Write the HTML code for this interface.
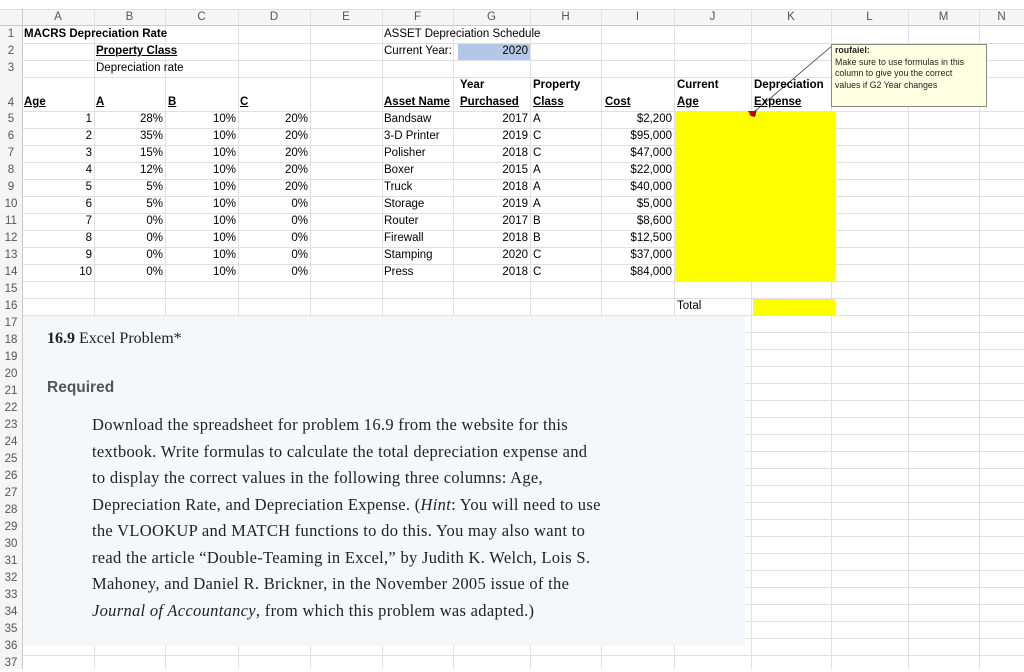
<!DOCTYPE html>
<html><head><meta charset="utf-8">
<style>
*{margin:0;padding:0;box-sizing:border-box}
body{width:1024px;height:669px;overflow:hidden;background:#fff;position:relative;font-family:"Liberation Sans",sans-serif;font-size:11.5px;color:#000}
.t{position:absolute;height:17px;line-height:17px;white-space:nowrap}
.r{text-align:right}
.b{font-weight:bold}
.u{text-decoration:underline}
.h{position:absolute;color:#555;font-size:11.5px;text-align:center;height:17px;line-height:17px}
.sr{font-family:"Liberation Serif",serif;color:#222}
</style></head><body>
<svg width="1024" height="669" style="position:absolute;left:0;top:0">
<rect x="0" y="0" width="1024" height="9" fill="#fff"/>
<rect x="0" y="9" width="1024" height="17" fill="#f5f5f5"/>
<rect x="0" y="9" width="22" height="660" fill="#f5f5f5"/>
<g stroke="#e0e0e0" stroke-width="1">
<line x1="0" y1="25.5" x2="1024" y2="25.5" stroke="#c8c8c8"/>
<line x1="0" y1="9.5" x2="1024" y2="9.5"/>
<line x1="22" y1="43.5" x2="1024" y2="43.5"/><line x1="22" y1="60.5" x2="1024" y2="60.5"/><line x1="22" y1="77.5" x2="1024" y2="77.5"/>
<line x1="22" y1="111.5" x2="1024" y2="111.5"/><line x1="22" y1="128.5" x2="1024" y2="128.5"/><line x1="22" y1="145.5" x2="1024" y2="145.5"/><line x1="22" y1="162.5" x2="1024" y2="162.5"/><line x1="22" y1="179.5" x2="1024" y2="179.5"/><line x1="22" y1="196.5" x2="1024" y2="196.5"/><line x1="22" y1="213.5" x2="1024" y2="213.5"/><line x1="22" y1="230.5" x2="1024" y2="230.5"/><line x1="22" y1="247.5" x2="1024" y2="247.5"/><line x1="22" y1="264.5" x2="1024" y2="264.5"/><line x1="22" y1="281.5" x2="1024" y2="281.5"/><line x1="22" y1="298.5" x2="1024" y2="298.5"/><line x1="22" y1="315.5" x2="1024" y2="315.5"/><line x1="22" y1="332.5" x2="1024" y2="332.5"/><line x1="22" y1="349.5" x2="1024" y2="349.5"/><line x1="22" y1="366.5" x2="1024" y2="366.5"/><line x1="22" y1="383.5" x2="1024" y2="383.5"/><line x1="22" y1="400.5" x2="1024" y2="400.5"/><line x1="22" y1="417.5" x2="1024" y2="417.5"/><line x1="22" y1="434.5" x2="1024" y2="434.5"/><line x1="22" y1="451.5" x2="1024" y2="451.5"/><line x1="22" y1="468.5" x2="1024" y2="468.5"/><line x1="22" y1="485.5" x2="1024" y2="485.5"/><line x1="22" y1="502.5" x2="1024" y2="502.5"/><line x1="22" y1="519.5" x2="1024" y2="519.5"/><line x1="22" y1="536.5" x2="1024" y2="536.5"/><line x1="22" y1="553.5" x2="1024" y2="553.5"/><line x1="22" y1="570.5" x2="1024" y2="570.5"/><line x1="22" y1="587.5" x2="1024" y2="587.5"/><line x1="22" y1="604.5" x2="1024" y2="604.5"/><line x1="22" y1="621.5" x2="1024" y2="621.5"/><line x1="22" y1="638.5" x2="1024" y2="638.5"/><line x1="22" y1="655.5" x2="1024" y2="655.5"/>
<line x1="22.5" y1="9" x2="22.5" y2="669" stroke="#c8c8c8"/>
<line x1="94.5" y1="9" x2="94.5" y2="669"/><line x1="165.5" y1="9" x2="165.5" y2="669"/><line x1="238.5" y1="9" x2="238.5" y2="669"/><line x1="310.5" y1="9" x2="310.5" y2="669"/><line x1="382.5" y1="9" x2="382.5" y2="669"/><line x1="453.5" y1="9" x2="453.5" y2="669"/><line x1="530.5" y1="9" x2="530.5" y2="669"/><line x1="601.5" y1="9" x2="601.5" y2="669"/><line x1="674.5" y1="9" x2="674.5" y2="669"/><line x1="751.5" y1="9" x2="751.5" y2="669"/><line x1="831.5" y1="9" x2="831.5" y2="669"/><line x1="908.5" y1="9" x2="908.5" y2="669"/><line x1="979.5" y1="9" x2="979.5" y2="669"/>
</g>
<rect x="458" y="44" width="72" height="16" fill="#b4c7e7"/>
<rect x="675" y="112" width="160" height="169" fill="#ffff00"/>
<rect x="753" y="299" width="82" height="16" fill="#ffff00"/>
<rect x="23" y="316" width="722" height="330" fill="#f6f7fa"/>
<line x1="833" y1="45" x2="754" y2="112" stroke="#333" stroke-width="0.8"/>
<polygon points="749,115 757,109 755,117" fill="#333"/>
<polygon points="748,111 756,111 752,117" fill="#c00"/>
<rect x="831.5" y="44.5" width="155" height="62" fill="#ffffe1" stroke="#888"/>
</svg>

<div class="h" style="left:22px;top:9px;width:72px">A</div><div class="h" style="left:94px;top:9px;width:71px">B</div><div class="h" style="left:165px;top:9px;width:73px">C</div><div class="h" style="left:238px;top:9px;width:72px">D</div><div class="h" style="left:310px;top:9px;width:72px">E</div><div class="h" style="left:382px;top:9px;width:71px">F</div><div class="h" style="left:453px;top:9px;width:77px">G</div><div class="h" style="left:530px;top:9px;width:71px">H</div><div class="h" style="left:601px;top:9px;width:73px">I</div><div class="h" style="left:674px;top:9px;width:77px">J</div><div class="h" style="left:751px;top:9px;width:80px">K</div><div class="h" style="left:831px;top:9px;width:77px">L</div><div class="h" style="left:908px;top:9px;width:71px">M</div><div class="h" style="left:979px;top:9px;width:45px">N</div>

<div class="h" style="left:0;width:22px;top:26px">1</div><div class="h" style="left:0;width:22px;top:43px">2</div><div class="h" style="left:0;width:22px;top:60px">3</div><div class="h" style="left:0;width:22px;top:95px">4</div>
<div class="h" style="left:0;width:22px;top:111px">5</div><div class="h" style="left:0;width:22px;top:128px">6</div><div class="h" style="left:0;width:22px;top:145px">7</div><div class="h" style="left:0;width:22px;top:162px">8</div><div class="h" style="left:0;width:22px;top:179px">9</div><div class="h" style="left:0;width:22px;top:196px">10</div><div class="h" style="left:0;width:22px;top:213px">11</div><div class="h" style="left:0;width:22px;top:230px">12</div><div class="h" style="left:0;width:22px;top:247px">13</div><div class="h" style="left:0;width:22px;top:264px">14</div><div class="h" style="left:0;width:22px;top:281px">15</div><div class="h" style="left:0;width:22px;top:298px">16</div><div class="h" style="left:0;width:22px;top:315px">17</div><div class="h" style="left:0;width:22px;top:332px">18</div><div class="h" style="left:0;width:22px;top:349px">19</div><div class="h" style="left:0;width:22px;top:366px">20</div><div class="h" style="left:0;width:22px;top:383px">21</div><div class="h" style="left:0;width:22px;top:400px">22</div><div class="h" style="left:0;width:22px;top:417px">23</div><div class="h" style="left:0;width:22px;top:434px">24</div><div class="h" style="left:0;width:22px;top:451px">25</div><div class="h" style="left:0;width:22px;top:468px">26</div><div class="h" style="left:0;width:22px;top:485px">27</div><div class="h" style="left:0;width:22px;top:502px">28</div><div class="h" style="left:0;width:22px;top:519px">29</div><div class="h" style="left:0;width:22px;top:536px">30</div><div class="h" style="left:0;width:22px;top:553px">31</div><div class="h" style="left:0;width:22px;top:570px">32</div><div class="h" style="left:0;width:22px;top:587px">33</div><div class="h" style="left:0;width:22px;top:604px">34</div><div class="h" style="left:0;width:22px;top:621px">35</div><div class="h" style="left:0;width:22px;top:638px">36</div><div class="h" style="left:0;width:22px;top:655px">37</div>

<div class="t b" style="left:24px;top:26px">MACRS Depreciation Rate</div>
<div class="t b u" style="left:96px;top:43px">Property Class</div>
<div class="t" style="left:96px;top:60px">Depreciation rate</div>
<div class="t" style="left:384px;top:26px">ASSET Depreciation Schedule</div>
<div class="t" style="left:384px;top:43px">Current Year:</div>
<div class="t r" style="left:458px;top:43px;width:70px">2020</div>

<div class="t b u" style="left:24px;top:94px">Age</div>
<div class="t b u" style="left:96px;top:94px">A</div>
<div class="t b u" style="left:168px;top:94px">B</div>
<div class="t b u" style="left:240px;top:94px">C</div>
<div class="t b u" style="left:384px;top:94px">Asset Name</div>
<div class="t b" style="left:460px;top:77px">Year</div>
<div class="t b u" style="left:460px;top:94px">Purchased</div>
<div class="t b" style="left:533px;top:77px">Property</div>
<div class="t b u" style="left:533px;top:94px">Class</div>
<div class="t b u" style="left:605px;top:94px">Cost</div>
<div class="t b" style="left:677px;top:77px">Current</div>
<div class="t b u" style="left:677px;top:94px">Age</div>
<div class="t b" style="left:754px;top:77px">Depreciation</div>
<div class="t b u" style="left:754px;top:94px">Expense</div>

<div style="position:absolute;left:0;top:111px">
<div style="position:absolute;left:22px;width:70px;text-align:right;line-height:17px">1<br>2<br>3<br>4<br>5<br>6<br>7<br>8<br>9<br>10</div>
<div style="position:absolute;left:94px;width:69px;text-align:right;line-height:17px">28%<br>35%<br>15%<br>12%<br>5%<br>5%<br>0%<br>0%<br>0%<br>0%</div>
<div style="position:absolute;left:165px;width:71px;text-align:right;line-height:17px">10%<br>10%<br>10%<br>10%<br>10%<br>10%<br>10%<br>10%<br>10%<br>10%</div>
<div style="position:absolute;left:238px;width:70px;text-align:right;line-height:17px">20%<br>20%<br>20%<br>20%<br>20%<br>0%<br>0%<br>0%<br>0%<br>0%</div>
<div style="position:absolute;left:384px;width:70px;line-height:17px;white-space:nowrap">Bandsaw<br>3-D Printer<br>Polisher<br>Boxer<br>Truck<br>Storage<br>Router<br>Firewall<br>Stamping<br>Press</div>
<div style="position:absolute;left:453px;width:75px;text-align:right;line-height:17px">2017<br>2019<br>2018<br>2015<br>2018<br>2019<br>2017<br>2018<br>2020<br>2018</div>
<div style="position:absolute;left:533px;width:60px;line-height:17px">A<br>C<br>C<br>A<br>A<br>A<br>B<br>B<br>C<br>C</div>
<div style="position:absolute;left:601px;width:71px;text-align:right;line-height:17px">$2,200<br>$95,000<br>$47,000<br>$22,000<br>$40,000<br>$5,000<br>$8,600<br>$12,500<br>$37,000<br>$84,000</div>
</div>
<div class="t" style="left:677px;top:298px">Total</div>

<div style="position:absolute;left:835px;top:45px;width:152px;font-size:8.8px;line-height:11.5px;color:#222;white-space:nowrap">
<b>roufaiel:</b><br>Make sure to use formulas in this<br>column to give you the correct<br>values if G2 Year changes</div>

<div class="sr" style="position:absolute;left:47px;top:330px;font-size:16px"><b>16.9</b> Excel Problem*</div>
<div style="position:absolute;left:47px;top:379px;font-size:15.5px;font-weight:bold;color:#555">Required</div>
<div class="sr" style="position:absolute;left:92px;top:412px;font-size:16.5px;letter-spacing:0.3px;line-height:26.5px;white-space:nowrap">Download the spreadsheet for problem 16.9 from the website for this<br>textbook. Write formulas to calculate the total depreciation expense and<br>to display the correct values in the following three columns: Age,<br>Depreciation Rate, and Depreciation Expense. (<i>Hint</i>: You will need to use<br>the VLOOKUP and MATCH functions to do this. You may also want to<br>read the article “Double-Teaming in Excel,” by Judith K. Welch, Lois S.<br>Mahoney, and Daniel R. Brickner, in the November 2005 issue of the<br><i>Journal of Accountancy</i>, from which this problem was adapted.)</div>
</body></html>
